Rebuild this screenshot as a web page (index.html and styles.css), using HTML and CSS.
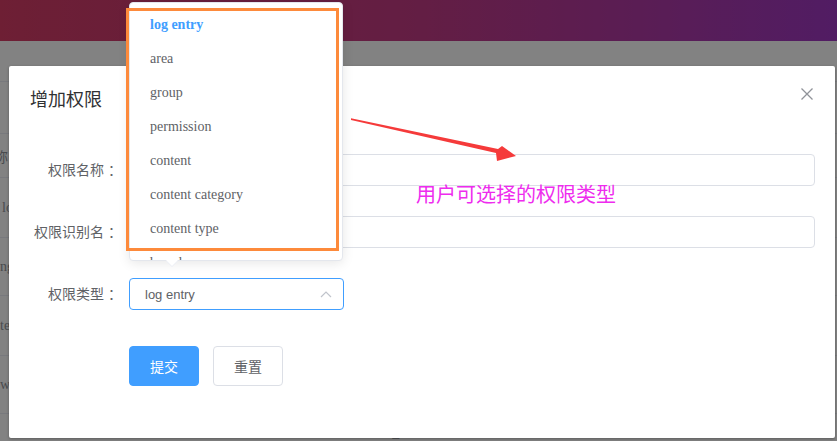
FILE: index.html
```html
<!DOCTYPE html>
<html lang="zh-CN">
<head>
<meta charset="utf-8">
<title>增加权限</title>
<link rel="stylesheet" href="styles.css">
</head>
<body>
<div class="page">
  <header class="topbar"></header>
  <main class="content">
    <div class="row row-h1"></div>
    <div class="row row-h2"><span class="cell cut">称</span></div>
    <div class="row row-h3"><span class="cell pad2">log entry</span></div>
    <div class="row row-h4"><span class="cell">ng</span></div>
    <div class="row row-h3"><span class="cell">te</span></div>
    <div class="row row-h4"><span class="cell">w :</span></div>
    <div class="row row-h5"><span class="cell tail">add_www</span></div>
  </main>
</div>

<div class="overlay"></div>

<section class="dialog">
  <div class="dialog-header">
    <span class="dialog-title">增加权限</span>
    <svg class="close" width="16" height="16" viewBox="0 0 16 16"><path d="M2.5 2.5 L13.5 13.5 M13.5 2.5 L2.5 13.5" stroke="#909399" stroke-width="1.3" fill="none"/></svg>
  </div>
  <div class="dialog-body">
    <div class="form-row">
      <label class="label">权限名称<span class="colon">：</span></label>
      <div class="input"></div>
    </div>
    <div class="form-row">
      <label class="label">权限识别名<span class="colon">：</span></label>
      <div class="input"></div>
    </div>
    <div class="form-row">
      <label class="label">权限类型<span class="colon">：</span></label>
      <div class="select">
        <span class="select-value">log entry</span>
        <svg class="chev" width="12" height="8" viewBox="0 0 12 8"><polyline points="1,7 6,2 11,7" fill="none" stroke="#c0c4cc" stroke-width="1.2"/></svg>
      </div>
    </div>
    <div class="btn-row">
      <button class="btn primary">提交</button>
      <button class="btn plain">重置</button>
    </div>
  </div>
</section>

<div class="dropdown">
  <div class="dropdown-wrap">
    <ul class="options">
      <li class="option selected">log entry</li>
      <li class="option">area</li>
      <li class="option">group</li>
      <li class="option">permission</li>
      <li class="option">content</li>
      <li class="option">content category</li>
      <li class="option">content type</li>
      <li class="option">brand</li>
    </ul>
  </div>
  <div class="dropdown-arrow"></div>
</div>

<div class="highlight"></div>

<svg class="annot" width="837" height="441" viewBox="0 0 837 441">
  <polygon points="351,118.3 498,149 502,146 516,156 497,161 496,153 351,120" fill="#f53a3a"/>
</svg>

<div class="note">用户可选择的权限类型</div>
</body>
</html>
```

FILE: styles.css
```css
* { box-sizing: border-box; }
html, body {
  margin: 0;
  padding: 0;
  width: 837px;
  height: 441px;
  overflow: hidden;
  background: #fff;
  font-family: "Liberation Sans", "Noto Sans CJK SC", sans-serif;
}

.page {
  display: flex;
  flex-direction: column;
  height: 441px;
  overflow: hidden;
}
.topbar {
  height: 41px;
  flex: none;
  background: linear-gradient(90deg, #d73d67 0%, #c33b85 50%, #a038c3 100%);
}
.content {
  flex: 1;
  min-height: 0;
  overflow: hidden;
  padding-top: 40px;
  background: #fff;
  font-family: "Liberation Serif", "Noto Sans CJK SC", serif;
  font-size: 14px;
  color: #909399;
}
.row {
  border-top: 1px solid #ebeef5;
  display: flex;
  align-items: center;
}
.row-h1 { height: 52px; }
.row-h2 { height: 44px; }
.row-h3 { height: 60px; }
.row-h4 { height: 58px; }
.row-h5 { height: 28px; align-items: flex-end; }
.cell.cut { margin-left: -6px; font-family: "Noto Sans CJK SC", sans-serif; }
.cell.pad2 { padding-left: 2px; }
.cell.tail { margin-left: 372px; line-height: 16px; }

.overlay {
  position: absolute;
  left: 0; top: 0;
  width: 837px; height: 441px;
  background: rgba(0, 0, 0, 0.49);
}

.dialog {
  position: absolute;
  left: 9px;
  top: 66px;
  width: 826px;
  height: 372px;
  background: #fff;
  border-radius: 2px;
  box-shadow: 0 1px 3px rgba(0, 0, 0, 0.3);
  display: flex;
  flex-direction: column;
}
.dialog-header {
  padding: 20px 20px 10px;
  display: flex;
  justify-content: space-between;
  align-items: center;
}
.dialog-title {
  font-family: "Noto Sans CJK SC", sans-serif;
  font-size: 18px;
  line-height: 24px;
  color: #303133;
  margin-left: 1px;
}
.close { display: block; margin-top: -8px; }

.dialog-body {
  padding: 34px 20px 0;
}
.form-row {
  display: flex;
  align-items: center;
  height: 32px;
  margin-bottom: 30px;
}
.label {
  width: 100px;
  flex: none;
  padding-right: 11px;
  text-align: right;
  font-family: "Noto Sans CJK SC", sans-serif;
  font-size: 14px;
  color: #606266;
  margin-top: -3px;
}
.colon {
  display: inline-block;
  transform: translateX(4px);
}
.input {
  flex: 1;
  height: 32px;
  border: 1px solid #dcdfe6;
  border-radius: 4px;
}
.select {
  width: 215px;
  height: 32px;
  border: 1px solid #409eff;
  border-radius: 4px;
  display: flex;
  align-items: center;
  justify-content: space-between;
  padding: 0 11px 0 15px;
}
.select-value {
  font-family: "Liberation Sans", sans-serif;
  font-size: 13px;
  color: #606266;
}
.chev { display: block; }

.btn-row {
  display: flex;
  gap: 14px;
  padding-left: 100px;
  padding-top: 6px;
}
.btn {
  width: 70px;
  height: 40px;
  border-radius: 4px;
  font-family: "Noto Sans CJK SC", sans-serif;
  font-size: 14px;
  padding: 0;
  cursor: pointer;
}
.btn.primary {
  background: #409eff;
  border: 1px solid #409eff;
  color: #fff;
}
.btn.plain {
  background: #fff;
  border: 1px solid #dcdfe6;
  color: #606266;
}

.dropdown {
  position: absolute;
  left: 129px;
  top: 2px;
  width: 214px;
  height: 259px;
  background: #fff;
  border: 1px solid #e4e7ed;
  border-radius: 4px;
  box-shadow: 0 2px 12px rgba(0, 0, 0, 0.1);
}
.dropdown-wrap {
  height: 100%;
  overflow: hidden;
  border-radius: 4px;
}
.options {
  list-style: none;
  margin: 0;
  padding: 5px 0 0;
}
.option {
  height: 34px;
  line-height: 34px;
  padding: 0 20px;
  font-family: "Liberation Serif", serif;
  font-size: 14px;
  color: #606266;
  white-space: nowrap;
}
.option.selected {
  color: #409eff;
  font-weight: bold;
}
.dropdown-arrow {
  position: absolute;
  left: 36px;
  bottom: -6px;
  width: 0;
  height: 0;
  border-left: 6px solid transparent;
  border-right: 6px solid transparent;
  border-top: 6px solid #fff;
  filter: drop-shadow(0 1px 0 #ebeef5);
}

.highlight {
  position: absolute;
  left: 126px;
  top: 8px;
  width: 213px;
  height: 243px;
  border: 3px solid #fd8a3b;
}

.annot {
  position: absolute;
  left: 0;
  top: 0;
}

.note {
  position: absolute;
  left: 416px;
  top: 183px;
  font-family: "Noto Sans CJK SC", sans-serif;
  font-size: 20px;
  line-height: 22px;
  color: #ee2cee;
  white-space: nowrap;
}
```
